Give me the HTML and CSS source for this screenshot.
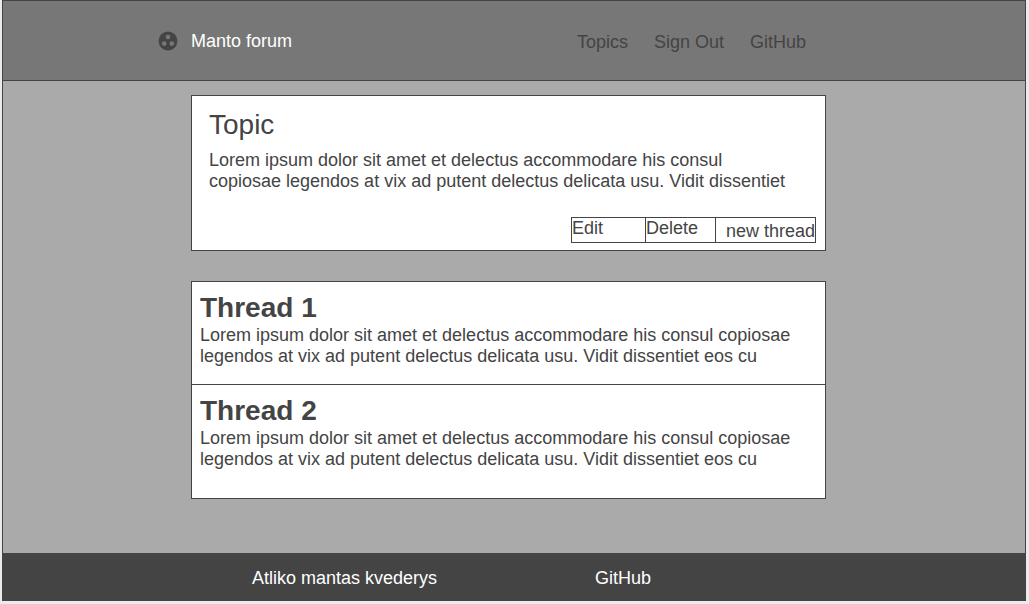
FILE: index.html
```html
<!DOCTYPE html>
<html lang="en">
<head>
  <meta charset="utf-8">
  <meta name="viewport" content="width=device-width, initial-scale=1">
  <title>Manto forum</title>
  <link rel="stylesheet" href="styles.css">
</head>
<body>
  <div class="page">
    <header class="header columns">
      <svg class="logo" viewBox="0 0 20 20" aria-hidden="true">
        <circle class="logo-disc" cx="10" cy="10" r="9.4"/>
        <circle class="logo-dot" cx="10" cy="6" r="2.3"/>
        <circle class="logo-dot" cx="6.2" cy="12.6" r="2.3"/>
        <circle class="logo-dot" cx="13.8" cy="12.6" r="2.3"/>
      </svg>
      <div class="header-main">
        <a class="brand" href="#">Manto forum</a>
        <nav class="nav">
          <a href="#">Topics</a>
          <a href="#">Sign Out</a>
          <a href="#">GitHub</a>
        </nav>
      </div>
    </header>

    <main class="main columns">
      <div class="content">
        <section class="card topic">
          <h1 class="topic-title">Topic</h1>
          <p class="text">Lorem ipsum dolor sit amet et delectus accommodare his consul copiosae legendos at vix ad putent delectus delicata usu. Vidit dissentiet</p>
          <div class="actions">
            <button class="action action-edit" type="button">Edit</button>
            <button class="action action-delete" type="button">Delete</button>
            <button class="action action-new" type="button">new thread</button>
          </div>
        </section>

        <section class="card">
          <article class="thread">
            <h2 class="thread-title">Thread 1</h2>
            <p class="text">Lorem ipsum dolor sit amet et delectus accommodare his consul copiosae legendos at vix ad putent delectus delicata usu. Vidit dissentiet eos cu</p>
          </article>
          <article class="thread">
            <h2 class="thread-title">Thread 2</h2>
            <p class="text">Lorem ipsum dolor sit amet et delectus accommodare his consul copiosae legendos at vix ad putent delectus delicata usu. Vidit dissentiet eos cu</p>
          </article>
        </section>
      </div>
    </main>

    <footer class="footer columns">
      <div class="footer-main">
        <span>Atliko mantas kvederys</span>
        <a href="#">GitHub</a>
      </div>
    </footer>
  </div>
</body>
</html>
```

FILE: styles.css
```css
:root {
  --ink: #444;
  --header: #777;
  --backdrop: #aaa;
}

* {
  box-sizing: border-box;
}

body {
  margin: 0;
  padding: 0 3px 3px 2px;
  min-height: 100vh;
  display: flex;
  flex-direction: column;
  background: #ebebeb;
  color: var(--ink);
  font: 18px/21px "Liberation Sans", Arial, sans-serif;
}

h1,
h2,
p {
  margin: 0;
}

a {
  color: inherit;
  text-decoration: none;
}

.page {
  flex: 1;
  display: flex;
  flex-direction: column;
  border: 1px solid var(--ink);
  background: var(--backdrop);
}

.columns {
  display: grid;
  grid-template-columns: 1fr minmax(0, 635px) 1fr;
  padding-right: 11px;
}

.header {
  align-items: center;
  min-height: 80px;
  border-bottom: 1px solid var(--ink);
  background: var(--header);
}

.logo {
  width: 20px;
  height: 20px;
  margin-right: 13px;
  justify-self: end;
}

.logo-disc {
  fill: var(--ink);
}

.logo-dot {
  fill: var(--header);
}

.header-main {
  display: flex;
  justify-content: space-between;
  align-items: center;
  padding: 2px 20px 0 0;
}

.brand {
  color: #fff;
}

.nav {
  display: flex;
  gap: 26px;
  padding-top: 2px;
}

.main {
  flex: 1;
  padding-top: 14px;
  padding-bottom: 30px;
}

.content {
  grid-column: 2;
  display: flex;
  flex-direction: column;
  gap: 30px;
}

.card {
  border: 1px solid var(--ink);
  background: #fff;
}

.topic {
  padding: 12px 9px 7px 17px;
}

.topic-title {
  margin-bottom: 9px;
  font-size: 28px;
  line-height: 33px;
  font-weight: normal;
}

.topic .text {
  padding-right: 24px;
}

.actions {
  display: flex;
  width: 245px;
  height: 26px;
  margin: 25px 0 0 auto;
  border: 1px solid var(--ink);
}

.action {
  display: flex;
  padding: 0;
  border: 0;
  background: none;
  color: inherit;
  font: inherit;
  cursor: pointer;
}

.action + .action {
  border-left: 1px solid var(--ink);
}

.action-edit {
  width: 73px;
}

.action-delete {
  width: 70px;
}

.action-new {
  flex: 1;
  justify-content: flex-end;
  align-items: flex-end;
}

.thread {
  min-height: 102px;
  padding: 9px 8px 16px;
}

.thread + .thread {
  min-height: 114px;
  border-top: 1px solid var(--ink);
}

.thread-title {
  margin-bottom: 1px;
  font-size: 28px;
  line-height: 33px;
}

.footer {
  align-items: center;
  min-height: 47px;
  background: var(--ink);
  color: #fff;
}

.footer-main {
  grid-column: 2;
  display: grid;
  grid-template-columns: 343px auto;
  padding: 3px 0 0 61px;
}
```
